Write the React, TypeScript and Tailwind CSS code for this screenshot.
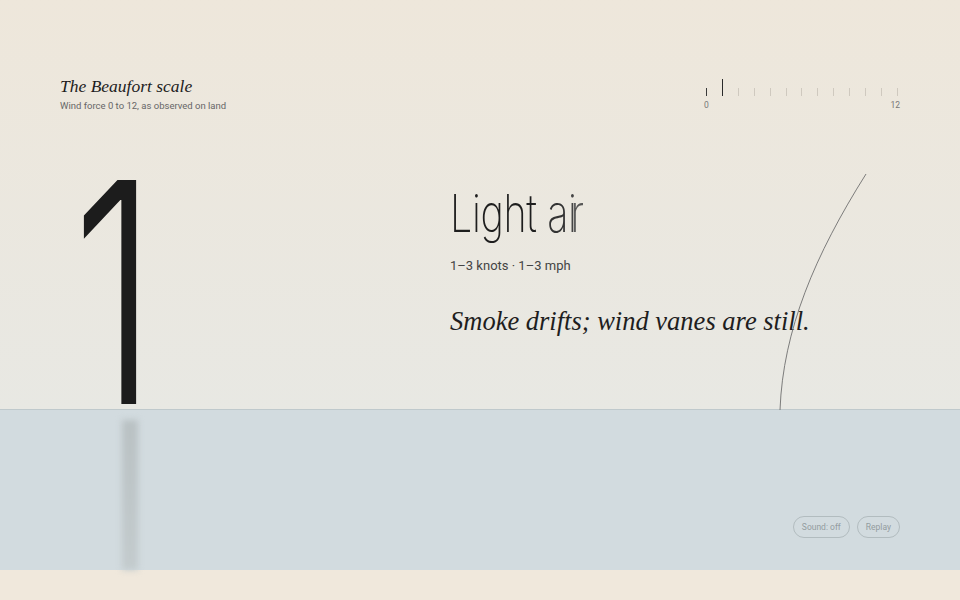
import React from 'react';

const SERIF = { fontFamily: '"Liberation Serif", "DejaVu Serif", serif' };
const SANS = { fontFamily: 'Roboto, "Liberation Sans", sans-serif' };
const THIN = { fontFamily: 'Inter, "Noto Sans", sans-serif' };

const FORCES = Array.from({ length: 13 }, (_, i) => i);
const CURRENT = 1;

/** Small force ruler in the top right corner */
function ForceRuler() {
  return (
    <div className="flex flex-col w-[196px]" style={SANS}>
      <div className="flex items-end justify-between h-[18px] px-[2px]">
        {FORCES.map((f) => (
          <span
            key={f}
            className={
              f === CURRENT
                ? 'w-px h-[17px] bg-[#2a2a2a]'
                : f === 0
                  ? 'w-px h-[8px] bg-[#3a3a3a]'
                  : 'w-px h-[8px] bg-[#cfc9bf]'
            }
          />
        ))}
      </div>
      <div className="flex justify-between mt-[5px] text-[8.5px] leading-none text-[#777]">
        <span>0</span>
        <span>12</span>
      </div>
    </div>
  );
}

export default function App() {
  return (
    <div className="w-[960px] h-[600px] flex flex-col overflow-hidden bg-[#efe8dc]">
      {/* Sky / land */}
      <div className="relative h-[410px] flex flex-col px-[60px] bg-gradient-to-b from-[#eee7db] to-[#e8e8e3] border-b border-[#bfc9cc]">
        <header className="flex justify-between items-start pt-[76px]">
          <div>
            <h1 className="text-[17.5px] leading-[20px] italic text-[#1d1d1d]" style={SERIF}>
              The Beaufort scale
            </h1>
            <p className="mt-[4px] text-[9.5px] leading-[12px] text-[#666]" style={SANS}>
              Wind force 0 to 12, as observed on land
            </p>
          </div>
          <div className="pt-[2px]">
            <ForceRuler />
          </div>
        </header>

        <div className="flex flex-1 min-h-0">
          <div className="w-[390px] relative">
            <span
              className="absolute left-[12px] bottom-[-37px] inline-block origin-bottom-left scale-x-[0.7] text-[308px] leading-none font-light text-[#1c1c1c]"
              style={THIN}
            >
              1
            </span>
          </div>
          <div className="pt-[76px]">
            <h2
              className="inline-block origin-left scale-x-[0.76] text-[52px] leading-none font-extralight text-[#1e1e1e] tracking-[-0.5px] whitespace-nowrap"
              style={THIN}
            >
              Light <span className="text-[#333]">a</span>
              <span className="text-[#444]">i</span>
              <span className="text-[#555] ml-[-8px]">r</span>
            </h2>
            <p className="mt-[19px] text-[13px] leading-none text-[#444]" style={SANS}>
              1–3 knots · 1–3 mph
            </p>
            <p className="mt-[36px] text-[26.5px] leading-none italic text-[#1e1e1e]" style={SERIF}>
              Smoke drifts; wind vanes are still.
            </p>
          </div>
        </div>

        {/* Bending stalk */}
        <svg
          className="absolute inset-0 pointer-events-none"
          width="960"
          height="410"
          viewBox="0 0 960 410"
          fill="none"
        >
          <path d="M866 174 C815 255 783 330 780 410" stroke="#6f6f6f" strokeWidth="0.9" />
        </svg>
      </div>

      {/* Water */}
      <div className="relative h-[160px] flex items-end justify-end px-[60px] pb-[32px] bg-[#d2dbdf]">
        <div className="absolute left-[122px] top-[10px] bottom-0 w-[16px] bg-gradient-to-b from-[#b9c1c3] to-[#c3cbcd] blur-[3px]" />
        <div className="relative flex gap-[7px]" style={SANS}>
          <button className="h-[22px] px-[8px] rounded-full border border-[#b2bcbf] text-[8.5px] text-[#929ca0]">
            Sound: off
          </button>
          <button className="h-[22px] px-[8px] rounded-full border border-[#b2bcbf] text-[8.5px] text-[#929ca0]">
            Replay
          </button>
        </div>
      </div>

      {/* Shore */}
      <div className="h-[30px] bg-[#f0e8dc]" />
    </div>
  );
}
